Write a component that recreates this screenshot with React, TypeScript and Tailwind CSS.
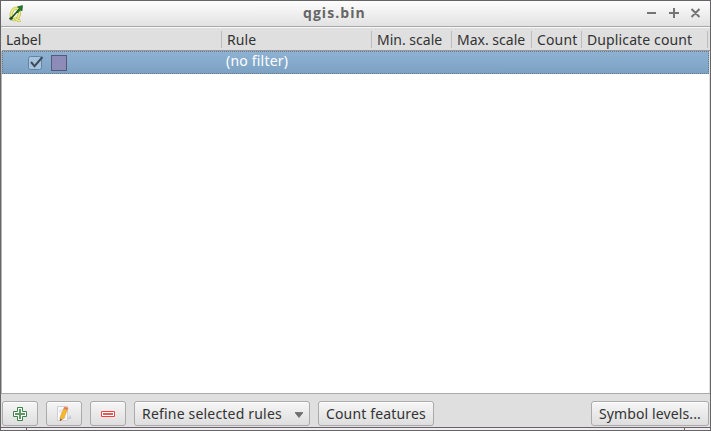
import type { ReactNode } from 'react';

const columns = [
  { label: 'Label', cell: 'w-[220px] pl-1', text: 'tracking-[0px]' },
  { label: 'Rule', cell: 'w-[150px] pl-[5px]', text: 'tracking-[0.1px]' },
  { label: 'Min. scale', cell: 'w-[80px] pl-[5px]', text: 'tracking-[0px]' },
  { label: 'Max. scale', cell: 'w-[80px] pl-[5px]', text: 'tracking-[0px]' },
  { label: 'Count', cell: 'w-[50px] pl-[5px]', text: 'tracking-[0.15px]' },
  { label: 'Duplicate count', cell: 'w-[126px] pl-[5px]', text: 'tracking-[0.12px]' },
];

function Button({ className, children }: { className: string; children: ReactNode }) {
  return (
    <button
      className={`flex h-[25px] shrink-0 items-center whitespace-nowrap rounded-[3px] border border-[#aaaaaa] bg-linear-to-b from-[#f6f6f6] to-[#dedede] shadow-[inset_0_1px_0_#ffffff] ${className}`}
    >
      {children}
    </button>
  );
}

function QgisLogo() {
  return (
    <svg width="17" height="18" viewBox="0 0 17 18">
      <ellipse cx="7.3" cy="9" rx="4" ry="5.8" transform="rotate(14 7.3 9)" fill="#f4f4ec" stroke="#b4b75c" strokeWidth="3.2" />
      <ellipse cx="7.3" cy="9" rx="4" ry="5.8" transform="rotate(14 7.3 9)" fill="none" stroke="#ecec78" strokeWidth="2" />
      <path d="M6.5 12.5q3 4 6 3" fill="none" stroke="#b4b75c" strokeWidth="2.8" />
      <path d="M6.5 12.5q3 4 6 3" fill="none" stroke="#ecec78" strokeWidth="1.6" />
      <path d="M3 13.5L11.5 4" stroke="#174f1c" strokeWidth="1.5" />
      <path d="M9.5 1.8L14.5.6 14 6 12.6 4.9 9.5 8 8.6 7 11.4 3.4z" fill="#227c2d" stroke="#164d1c" strokeWidth=".6" />
      <path d="M1.2 13.5h3.6M3 11.7v3.6" stroke="#164d1c" strokeWidth="1.3" />
    </svg>
  );
}

export default function App() {
  return (
    <div className="flex h-[431px] w-[711px] flex-col overflow-hidden border-x border-t border-[#666466] bg-[#dfdfdf] font-['Noto_Sans','Open_Sans',sans-serif] text-[14px] leading-5 text-[#333333]">
      <header className="flex h-[26px] shrink-0 items-center border-b border-[#a8a8a8] bg-linear-to-b from-[#fdfdfd] to-[#e2e2e2] pr-2 pl-[7px]">
        <div className="w-[295px] shrink-0"><QgisLogo /></div>
        <h1 className="-mt-0.5 grow font-['Open_Sans','Noto_Sans',sans-serif] font-bold tracking-[1.05px] text-[#666666]">qgis.bin</h1>
        <svg className="-mt-0.5" width="56" height="14" viewBox="0 0 56 14" fill="none" stroke="#747474" strokeWidth="2">
          <path d="M1 7h9M23 7h10M28 2v10M45.5 3l8 8M53.5 3l-8 8" />
        </svg>
      </header>

      <div className="ml-px flex h-6 shrink-0 items-center border-t border-b border-t-[#f9f9f9] border-b-[#999999]">
        {columns.map((c) => (
          <div key={c.label} className={`flex h-[17px] shrink-0 items-center whitespace-nowrap border-r border-[#bcbcbc] pt-px ${c.cell}`}>
            <span className={c.text}>{c.label}</span>
          </div>
        ))}
      </div>

      <main className="mr-px grow border-l border-[#b5b5b5] bg-white">
        <div className="flex h-[23px] border border-dotted border-[#68788a] bg-linear-to-b from-[#8fb2d2] to-[#7ba1c3] bg-origin-border">
          <div className="flex w-[223px] items-center pl-6">
            <svg width="18" height="17" viewBox="0 0 18 17">
              <rect x="1.5" y="2.5" width="13" height="13" rx="2" fill="#a6c4dd" stroke="#6484a2" />
              <path d="M4 8l3.5 4.2L15.5 3" fill="none" stroke="#3f4c5a" strokeWidth="2" />
            </svg>
            <div className="ml-[6px] size-4 border border-[#555a78] bg-[#8d8cb8]" />
          </div>
          <span className="-mt-px tracking-[0.2px] text-white">(no filter)</span>
        </div>
      </main>

      <footer className="flex h-[34px] shrink-0 items-start gap-2 border-t border-[#aaaaaa] pt-[7px] pr-px pl-px">
        <Button className="w-9 justify-center">
          <svg width="16" height="16" viewBox="0 0 16 16">
            <path d="M5.5 1.5h5v4h4v5h-4v4h-5v-4h-4v-5h4z" fill="#fff" stroke="#3d8147" />
            <path d="M8 3v10M3 8h10" stroke="#5a9962" strokeWidth="2" />
          </svg>
        </Button>
        <Button className="w-9 justify-center">
          <svg width="16" height="16" viewBox="0 0 16 16">
            <path d="M1.5.5h10v14h-10z" fill="#fbfbff" stroke="#cfcfd9" />
            <path d="M3 4h4M3 6h3M3 12h7" stroke="#d5d5dc" />
            <path d="M11 13l4-4v4z" fill="#c5ccd5" />
            <path d="M8.5 1l3.5 1-4 10-4 3 .6-5z" fill="#f7b92c" stroke="#e0962a" strokeWidth=".6" />
            <path d="M8.5 1l3.5 1-.8 2-3.5-1z" fill="#e67863" />
            <path d="M4.4 12.5l-.4 2.5 2-1.5z" fill="#5f5040" />
          </svg>
        </Button>
        <Button className="w-9 justify-center">
          <svg width="16" height="16" viewBox="0 0 16 16">
            <path d="M1.5 5.5h13v5h-13z" fill="#fff" stroke="#e94040" />
            <path d="M3 8h10" stroke="#ef5555" strokeWidth="2" />
          </svg>
        </Button>
        <Button className="w-[176px] justify-between pr-[6px] pl-[7px]">
          <span className="tracking-[0.19px]">Refine selected rules</span>
          <svg className="mt-0.5" width="8" height="6" viewBox="0 0 8 6"><path d="M0 .5h8L4 5.5z" fill="#707070" stroke="#555555" strokeWidth=".6" /></svg>
        </Button>
        <Button className="w-[116px] pl-[7px]"><span className="tracking-[0.15px]">Count features</span></Button>
        <Button className="ml-auto w-[118px] pl-[7px]"><span className="tracking-[0.12px]">Symbol levels...</span></Button>
      </footer>

      <div className="flex h-1 shrink-0 border-t border-b border-[#666466] bg-[#eeeeee]">
        <div className="w-[26px] border-r border-[#666466]" />
        <div className="w-[658px] border-r border-[#666466]" />
      </div>
    </div>
  );
}
